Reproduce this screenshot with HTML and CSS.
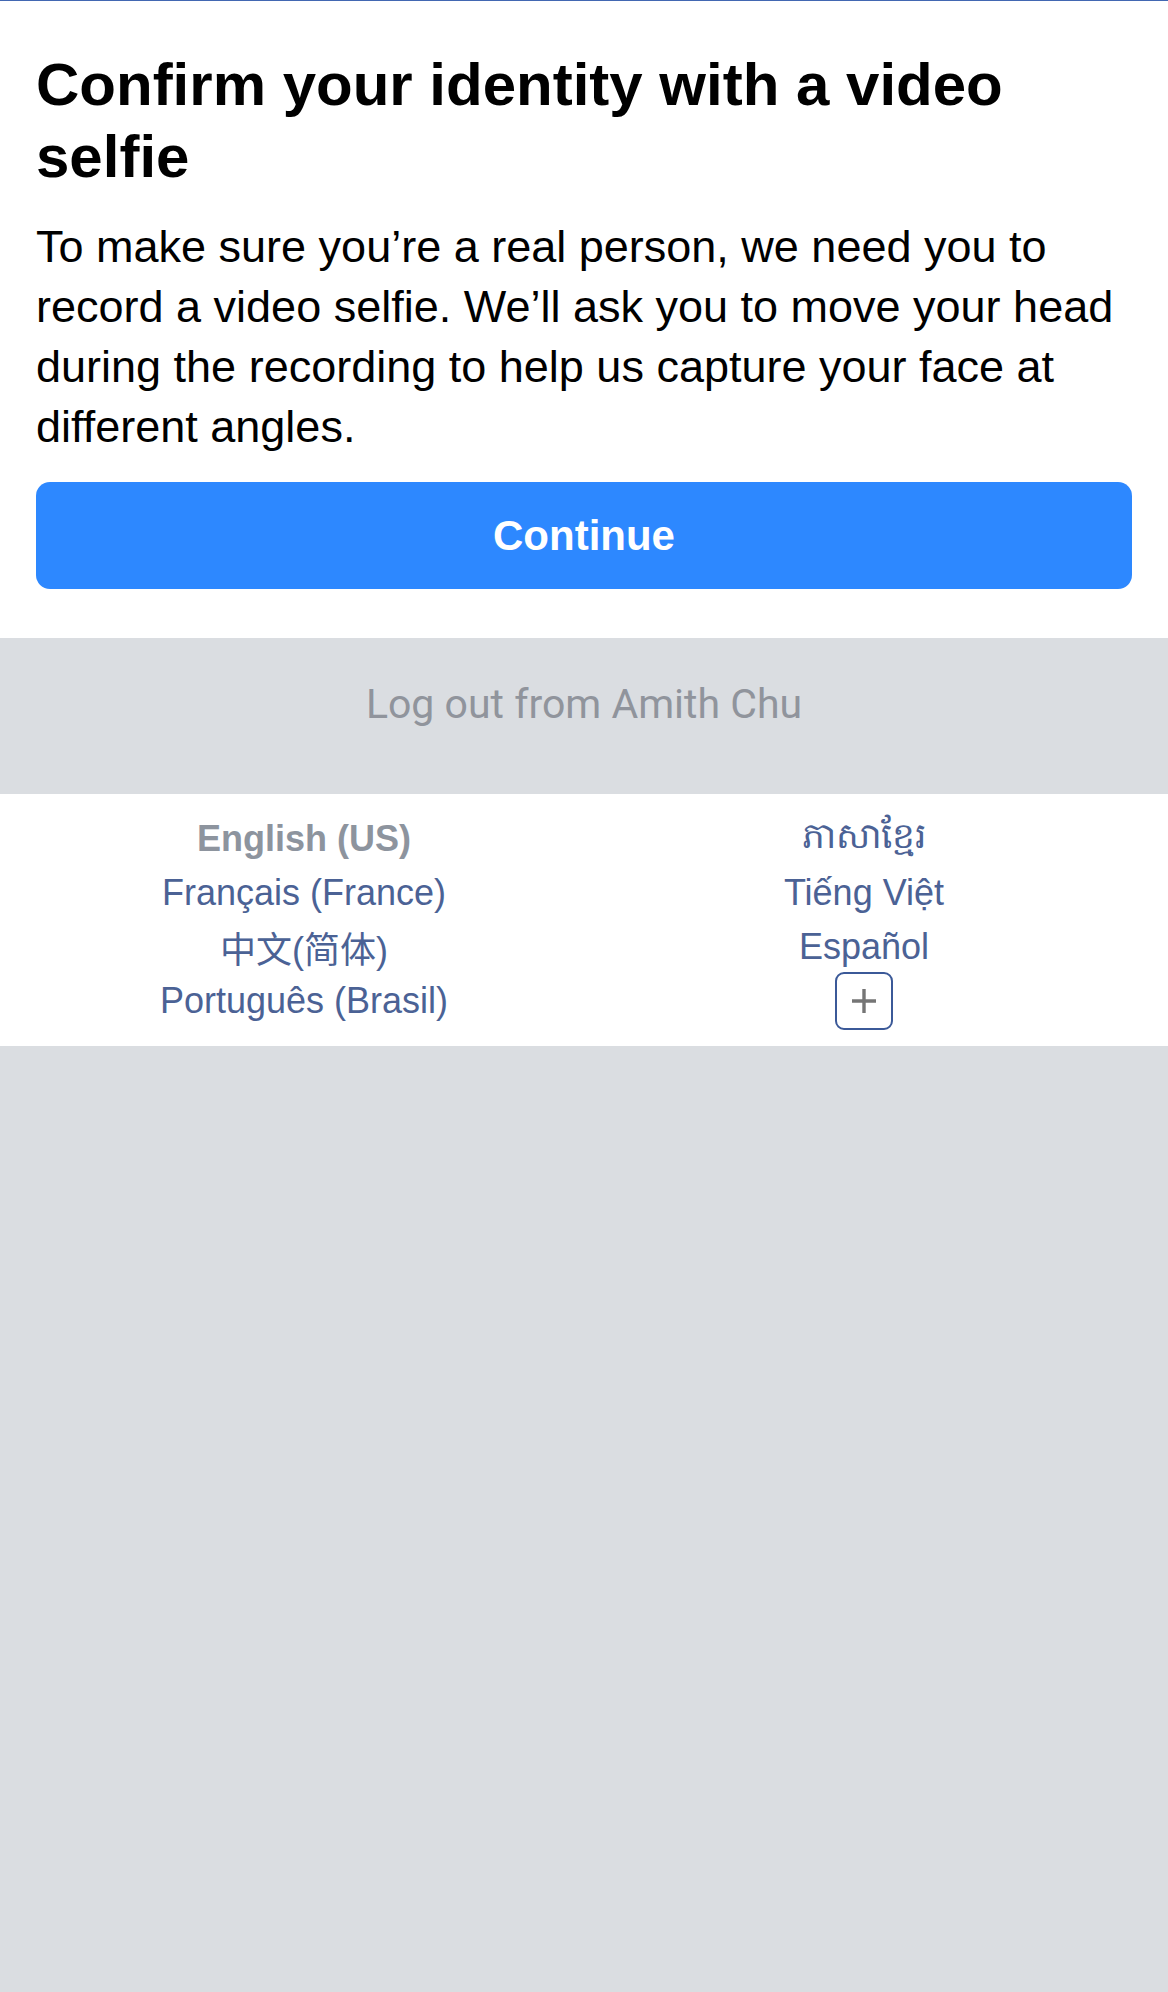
FILE: index.html
```html
<!DOCTYPE html>
<html lang="en">
<head>
<meta charset="utf-8">
<title>Confirm your identity with a video selfie</title>
<link rel="stylesheet" href="styles.css">
</head>
<body>
<main class="card">
  <h1 class="title">Confirm your identity with a video selfie</h1>
  <p class="lead">To make sure you’re a real person, we need you to record a video selfie. We’ll ask you to move your head during the recording to help us capture your face at different angles.</p>
  <button class="primary" type="button">Continue</button>
</main>
<div class="logout">Log out from Amith Chu</div>
<nav class="langs">
  <ul class="lang-col">
    <li class="lang current">English (US)</li>
    <li class="lang">Français (France)</li>
    <li class="lang">中文(简体)</li>
    <li class="lang">Português (Brasil)</li>
  </ul>
  <ul class="lang-col">
    <li class="lang">ភាសាខ្មែរ</li>
    <li class="lang">Tiếng Việt</li>
    <li class="lang">Español</li>
    <li class="lang"><span class="more">
      <svg width="30" height="30" viewBox="0 0 30 30"><path d="M15 3v24M3 15h24" stroke="#757575" stroke-width="3.4" fill="none"/></svg>
    </span></li>
  </ul>
</nav>
</body>
</html>
```
FILE: styles.css
```css
* { box-sizing: border-box; }
html, body { margin: 0; padding: 0; }
body {
  background: #dadde1;
  font-family: "Liberation Sans", Arial, "Noto Sans CJK SC", sans-serif;
  min-height: 1992px;
}
.card {
  background: #fff;
  border-top: 1px solid #4267b2;
  padding: 48px 36px 49px;
}
.title {
  margin: 0;
  font-size: 60px;
  line-height: 72px;
  font-weight: 700;
  color: #000;
}
.lead {
  margin: 24px 0 25px;
  font-size: 45px;
  line-height: 60px;
  color: #000;
}
.primary {
  display: block;
  width: 100%;
  height: 107px;
  border: 0;
  border-radius: 14px;
  background: #2d88ff;
  color: #fff;
  font-family: "Liberation Sans", Arial, sans-serif;
  font-size: 42px;
  font-weight: 700;
  padding: 0;
}
.logout {
  height: 156px;
  padding-top: 42px;
  text-align: center;
  font-family: Roboto, "Liberation Sans", sans-serif;
  font-size: 41px;
  line-height: 48px;
  color: #90949c;
}
.langs {
  background: #fff;
  display: grid;
  grid-template-columns: 1fr 1fr;
  padding: 18px 24px;
}
.lang-col {
  list-style: none;
  margin: 0;
  padding: 0;
  display: flex;
  flex-direction: column;
  align-items: center;
}
.lang {
  height: 54px;
  display: flex;
  align-items: center;
  font-size: 36px;
  color: #4b6295;
  white-space: nowrap;
}
.lang.current {
  font-weight: 700;
  color: #8d949e;
}
.more {
  width: 58px;
  height: 58px;
  border: 2.5px solid #3b5998;
  border-radius: 9px;
  display: flex;
  align-items: center;
  justify-content: center;
}
```
